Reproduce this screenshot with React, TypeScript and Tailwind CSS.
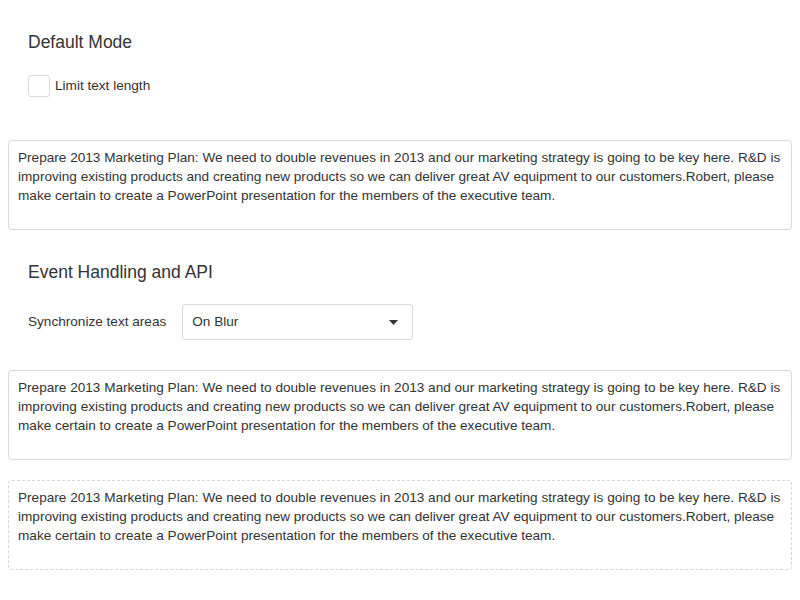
const TEXT =
  "Prepare 2013 Marketing Plan: We need to double revenues in 2013 and our marketing strategy is going to be key here. R&D is improving existing products and creating new products so we can deliver great AV equipment to our customers.Robert, please make certain to create a PowerPoint presentation for the members of the executive team.";

function Note({ dashed = false, className = "" }: { dashed?: boolean; className?: string }) {
  return (
    <div
      className={`mx-[8px] h-[90px] rounded-[4px] border ${
        dashed ? "border-dashed border-[#d6d6d6]" : "border-[#d9d9d9]"
      } px-[9px] pt-[7px] text-[13.6px] leading-[19px] text-[#333] ${className}`}
    >
      {TEXT}
    </div>
  );
}

export default function App() {
  return (
    <div className="min-h-[600px] w-[800px] bg-white font-['Liberation_Sans',Arial,sans-serif] text-[#333]">
      {/* DEFAULT MODE */}
      <div className="px-[28px] pt-[31px]">
        <h2 className="text-[17.5px] leading-[22px] font-normal">Default Mode</h2>
        <label className="mt-[22px] flex items-center gap-[5px] text-[13.6px]">
          <span className="h-[22px] w-[22px] rounded-[3px] border border-[#d9d9d9] bg-white" />
          Limit text length
        </label>
      </div>

      <Note className="mt-[43px]" />

      {/* EVENT HANDLING */}
      <div className="px-[28px] pt-[31px]">
        <h2 className="text-[17.5px] leading-[22px] font-normal">Event Handling and API</h2>
        <div className="mt-[21px] flex items-center gap-[16px] text-[13.6px]">
          <span>Synchronize text areas</span>
          <div className="flex h-[36px] w-[231px] items-center justify-between rounded-[3px] border border-[#d9d9d9] pl-[9px] pr-[14px]">
            <span>On Blur</span>
            <svg width="9" height="5" viewBox="0 0 9 5">
              <path d="M0 0 L9 0 L4.5 5 Z" fill="#333" />
            </svg>
          </div>
        </div>
      </div>

      <Note className="mt-[30px]" />
      <Note dashed className="mt-[20px]" />
    </div>
  );
}
